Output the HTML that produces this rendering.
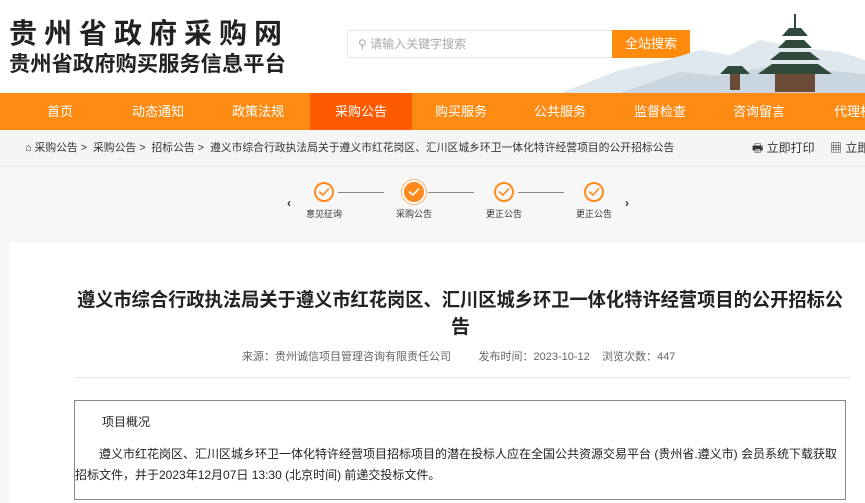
<!DOCTYPE html>
<html><head><meta charset="utf-8"><style>
*{margin:0;padding:0;box-sizing:border-box}
body{width:865px;height:494px;overflow:hidden;background:#f7f7f7;font-family:"Liberation Sans","Noto Sans CJK SC",sans-serif;position:relative}
.hdr{position:absolute;left:0;top:0;width:865px;height:93px;background:#fff}
.t1{position:absolute;left:9px;top:12px;font-size:28px;font-weight:bold;letter-spacing:7px;color:#222;white-space:nowrap}
.t2{position:absolute;left:9px;top:47px;font-size:21.3px;font-weight:bold;color:#222;white-space:nowrap}
.search{position:absolute;left:347px;top:30px;width:266px;height:28px;border:1px solid #e6e6e6;background:#fff;font-size:12px;color:#aaa;line-height:26px;padding-left:10px}
.btn{position:absolute;left:612px;top:30px;width:78px;height:28px;background:#ff8a0c;color:#fff;font-size:13px;text-align:center;line-height:28px}
.nav{position:absolute;left:0;top:93px;width:865px;height:37px;background:#fd8b13}
.nav div{position:absolute;top:0;width:102px;height:37px;line-height:37px;text-align:center;color:#fff;font-size:13px;white-space:nowrap}
.crumb{position:absolute;left:0;top:130px;width:865px;height:37px;background:#f5f5f5;border-bottom:1px solid #e8e8e8;font-size:10.8px;color:#333;line-height:37px;white-space:nowrap}
.step{position:absolute;top:182px;width:20px;height:20px;border:2px solid #ff8a1c;border-radius:50%}
.lbl{position:absolute;top:207px;font-size:9px;color:#333;width:60px;text-align:center}
.line{position:absolute;top:192px;height:1px;width:46px;background:#888}
.main{position:absolute;left:10px;top:243px;width:855px;height:260px;background:#fff}
</style></head><body>
<div class="hdr">
<div class="t1">贵州省政府采购网</div>
<div class="t2">贵州省政府购买服务信息平台</div>
<div class="search">⚲ 请输入关键字搜索</div>
<div class="btn">全站搜索</div>
<svg style="position:absolute;left:560px;top:10px" width="305" height="83" viewBox="0 0 305 83">
<path d="M0 83 L60 60 L100 52 L140 40 L170 45 L200 30 L240 38 L280 42 L305 50 L305 83Z" fill="#dfe8ee"/>
<path d="M60 83 L120 62 L160 66 L210 56 L260 60 L305 64 L305 83Z" fill="#c9d6df"/>
<g fill="#2f4a3a"><path d="M210 50 L260 50 L250 42 L220 42Z"/><path d="M218 38 L252 38 L244 30 L226 30Z"/><path d="M222 26 L248 26 L241 18 L229 18Z"/><rect x="234" y="4" width="2" height="14"/><path d="M198 64 L272 64 L258 54 L212 54Z"/><rect x="215" y="64" width="40" height="18" fill="#6b4a38"/><path d="M160 64 L190 64 L182 56 L168 56Z"/><rect x="170" y="64" width="10" height="16" fill="#6b4a38"/></g>
</svg>
</div>
<div class="nav">
<div style="left:9px">首页</div><div style="left:107px">动态通知</div><div style="left:207px">政策法规</div><div style="left:310px;background:#ff5a00">采购公告</div><div style="left:410px">购买服务</div><div style="left:509px">公共服务</div><div style="left:609px">监督检查</div><div style="left:708px">咨询留言</div><div style="left:808px;text-align:left;padding-left:26px;width:80px">代理机构</div>
</div>
<div class="crumb"><span style="position:absolute;left:25px">⌂ 采购公告 &gt; &nbsp;采购公告 &gt; &nbsp;招标公告 &gt; &nbsp;遵义市综合行政执法局关于遵义市红花岗区、汇川区城乡环卫一体化特许经营项目的公开招标公告</span>
<span style="position:absolute;left:752px;font-size:12px">🖶 立即打印</span><span style="position:absolute;left:830px;font-size:12px">▦ 立即</span></div>
<div class="line" style="left:338px"></div><div class="line" style="left:428px"></div><div class="line" style="left:518px"></div>
<div class="step" style="left:314px"></div>
<div class="step" style="left:404px;background:#ff8a1c;box-shadow:0 0 0 2px #fff,0 0 0 3px #ffb070"></div>
<div class="step" style="left:494px"></div><div class="step" style="left:584px"></div>
<svg style="position:absolute;left:314px;top:182px" width="300" height="20"><g fill="none" stroke-width="1.6" stroke-linecap="round"><path d="M5.5 10 L9 13 L14.5 7" stroke="#ff8a1c"/><path d="M95.5 10 L99 13 L104.5 7" stroke="#fff"/><path d="M185.5 10 L189 13 L194.5 7" stroke="#ff8a1c"/><path d="M275.5 10 L279 13 L284.5 7" stroke="#ff8a1c"/></g></svg>
<div style="position:absolute;left:287px;top:196px;font-size:12px;color:#333;font-weight:bold">‹</div>
<div style="position:absolute;left:625px;top:196px;font-size:12px;color:#333;font-weight:bold">›</div>
<div class="lbl" style="left:294px">意见征询</div><div class="lbl" style="left:384px">采购公告</div><div class="lbl" style="left:474px">更正公告</div><div class="lbl" style="left:564px">更正公告</div>
<div class="main">
<div style="position:absolute;left:23px;top:44px;width:855px;text-align:center;font-size:19px;font-weight:bold;color:#222;line-height:27px;white-space:nowrap"><span style="display:inline-block;transform:scaleX(0.96)">遵义市综合行政执法局关于遵义市红花岗区、汇川区城乡环卫一体化特许经营项目的公开招标公</span><br>告</div>
<div style="position:absolute;left:232px;top:105px;font-size:11px;color:#666;white-space:nowrap">来源：贵州诚信项目管理咨询有限责任公司 &nbsp; &nbsp; &nbsp; &nbsp; 发布时间：2023-10-12 &nbsp; &nbsp;浏览次数：447</div>
<div style="position:absolute;left:64px;top:134px;width:777px;height:1px;background:#e6e6e6"></div>
<div style="position:absolute;left:64px;top:157px;width:772px;height:100px;border:1px solid #888;font-size:12px;color:#222">
<div style="position:absolute;left:27px;top:12px">项目概况</div>
<div style="position:absolute;left:0;top:43px;width:770px;line-height:21px;text-indent:24px">遵义市红花岗区、汇川区城乡环卫一体化特许经营项目招标项目的潜在投标人应在全国公共资源交易平台 (贵州省.遵义市) 会员系统下载获取招标文件，并于2023年12月07日 13:30 (北京时间) 前递交投标文件。</div>
</div>
</div>
</body></html>
